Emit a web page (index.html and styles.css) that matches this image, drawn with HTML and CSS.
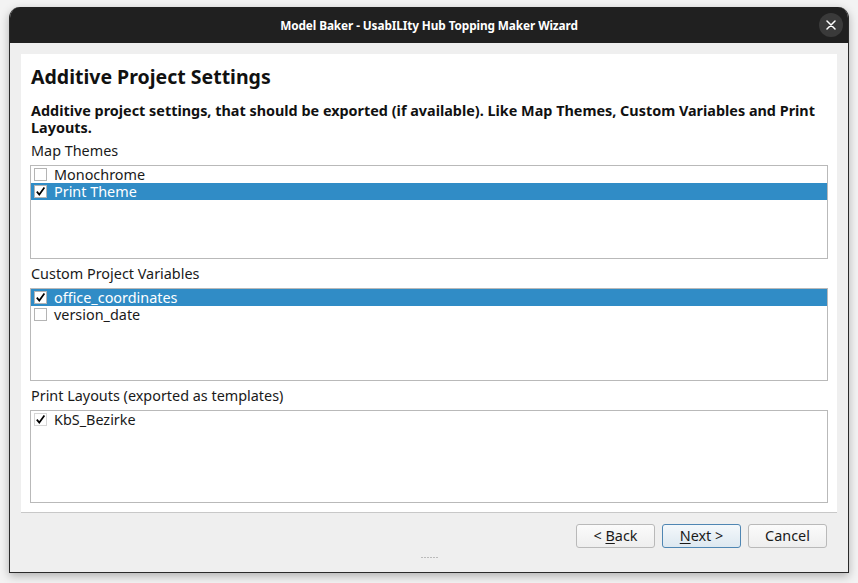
FILE: index.html
```html
<!DOCTYPE html>
<html>
<head>
<meta charset="utf-8">
<link rel="stylesheet" href="styles.css">
</head>
<body>
<div class="window">
  <div class="titlebar">
    <span class="title">Model Baker - UsabILIty Hub Topping Maker Wizard</span>
    <span class="close"><svg width="10" height="10" viewBox="0 0 10 10"><path d="M1 1L9 9M9 1L1 9" stroke="#ffffff" stroke-width="1.5" stroke-linecap="round"/></svg></span>
  </div>
  <div class="content">
    <div class="panel">
      <h1 class="heading">Additive Project Settings</h1>
      <p class="desc">Additive project settings, that should be exported (if available). Like Map Themes, Custom Variables and Print Layouts.</p>
      <div class="label">Map Themes</div>
      <div class="list first">
        <div class="row"><span class="cb"></span><span class="txt">Monochrome</span></div>
        <div class="row sel"><span class="cb"><svg width="11" height="11" viewBox="0 0 11 11"><path d="M1.8 5.6L4.3 8.6L9.4 1.6" fill="none" stroke="#000" stroke-width="1.7"/></svg></span><span class="txt">Print Theme</span></div>
      </div>
      <div class="label">Custom Project Variables</div>
      <div class="list">
        <div class="row sel"><span class="cb"><svg width="11" height="11" viewBox="0 0 11 11"><path d="M1.8 5.6L4.3 8.6L9.4 1.6" fill="none" stroke="#000" stroke-width="1.7"/></svg></span><span class="txt">office_coordinates</span></div>
        <div class="row"><span class="cb"></span><span class="txt">version_date</span></div>
      </div>
      <div class="label">Print Layouts (exported as templates)</div>
      <div class="list">
        <div class="row"><span class="cb plain"><svg width="11" height="11" viewBox="0 0 11 11"><path d="M1.8 5.6L4.3 8.6L9.4 1.6" fill="none" stroke="#000" stroke-width="1.7"/></svg></span><span class="txt">KbS_Bezirke</span></div>
      </div>
    </div>
    <div class="buttons">
      <button class="btn">&lt; <u>B</u>ack</button>
      <button class="btn default"><u>N</u>ext &gt;</button>
      <button class="btn">Cancel</button>
    </div>
    <div class="grip"><i></i><i></i><i></i><i></i><i></i><i></i></div>
  </div>
</div>
</body>
</html>
```

FILE: styles.css
```css
html, body {
  margin: 0;
  padding: 0;
  background: #f3f3f3;
  font-family: "Noto Sans", "Open Sans", sans-serif;
}
body {
  width: 858px;
  height: 583px;
  overflow: hidden;
}
.window {
  margin: 7px 0 0 9px;
  width: 840px;
  height: 566px;
  box-sizing: border-box;
  border-radius: 11px 11px 0 0;
  border: 1px solid #2a2a2a;
  border-top: none;
  background: #efefef;
  box-shadow: 0 3px 10px rgba(0,0,0,0.28);
  overflow: hidden;
  display: flex;
  flex-direction: column;
}
.titlebar {
  height: 36px;
  flex: none;
  background: #202020;
  color: #ffffff;
  display: flex;
  align-items: center;
  justify-content: center;
  position: relative;
}
.title {
  font-weight: bold;
  font-size: 11.8px;
  letter-spacing: -0.1px;
}
.close {
  position: absolute;
  right: 5px;
  top: 6px;
  width: 24px;
  height: 24px;
  border-radius: 50%;
  background: #3a3a3a;
  display: flex;
  align-items: center;
  justify-content: center;
}
.content {
  flex: 1;
  padding: 11px 11px 0 11px;
  display: flex;
  flex-direction: column;
}
.panel {
  background: #ffffff;
  border-bottom: 1px solid #c8c8c8;
  padding: 10px 9px 9px 9px;
  height: 459px;
  box-sizing: border-box;
}
.heading {
  margin: 0 0 0 1px;
  font-size: 19.5px;
  line-height: 26px;
  font-weight: bold;
  color: #111;
}
.desc {
  margin: 12px 0 0 1px;
  font-size: 14.4px;
  line-height: 17px;
  font-weight: bold;
  color: #111;
}
.label {
  margin: 6px 0 0 1px;
  font-size: 14.4px;
  line-height: 17px;
  color: #1a1a1a;
}
.list {
  margin-top: 6px;
  height: 93px;
  box-sizing: border-box;
  border: 1px solid #b9b9b9;
  background: #fff;
}
.list.first { height: 94px; }
.row {
  height: 17px;
  display: flex;
  align-items: center;
  font-size: 14.4px;
  line-height: 17px;
  color: #1a1a1a;
  overflow: hidden;
}
.row.sel {
  background: #308cc6;
  color: #ffffff;
}
.txt {
  white-space: nowrap;
}
.cb {
  width: 13px;
  height: 13px;
  flex: none;
  box-sizing: border-box;
  border: 1px solid #b4b4b4;
  background: #fff;
  margin: 0 7px 0 3px;
  display: flex;
  align-items: center;
  justify-content: center;
}
.cb.plain { border-color: #d6d6d6; }
.buttons {
  display: flex;
  justify-content: flex-end;
  gap: 7px;
  margin-top: 11px;
  padding-right: 10px;
}
.btn {
  width: 79px;
  height: 24px;
  box-sizing: border-box;
  border: 1px solid #b9b9b9;
  border-radius: 3px;
  background: linear-gradient(#fbfbfb, #eeeeee);
  font-family: "Noto Sans", "Open Sans", sans-serif;
  font-size: 14.4px;
  line-height: 20px;
  color: #1a1a1a;
  padding: 0;
}
.btn.default {
  border-color: #4f86b3;
  background: linear-gradient(#f4f8fb, #dde8f0);
}
.btn u { text-decoration-thickness: 1px; text-underline-offset: 2px; }
.grip {
  display: flex;
  justify-content: center;
  gap: 1px;
  margin-top: 9px;
}
.grip i {
  width: 2px;
  height: 1px;
  background: #bbbbbb;
}
```
